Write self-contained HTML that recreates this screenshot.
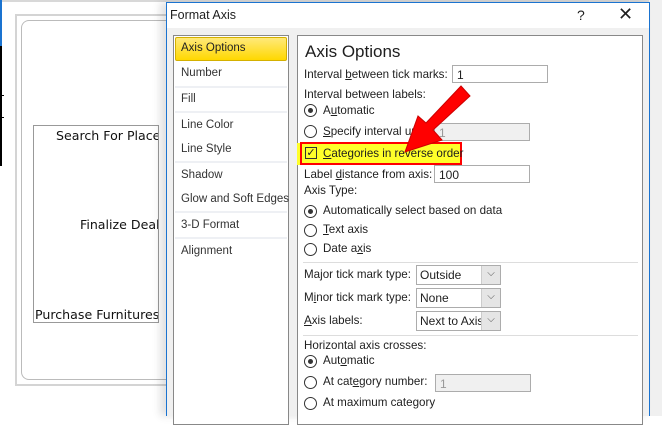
<!DOCTYPE html><html><head><style>
body{margin:0;width:662px;height:416px;overflow:hidden;background:#fff;font-family:"Liberation Sans",sans-serif;font-size:12px;color:#1e1e1e;position:relative}
.a{position:absolute;white-space:nowrap}
.li{position:absolute;left:181px;font-size:11.5px;color:#333}
.sep{position:absolute;left:175px;width:112px;height:2px;background:#eef0f4}
.t{position:absolute;font-size:11.6px;white-space:nowrap}
.r{position:absolute;width:11px;height:11px;border:1px solid #333;border-radius:50%;background:#fff}
.r.on::after{content:"";position:absolute;left:3px;top:3px;width:5px;height:5px;border-radius:50%;background:#333}
.in{position:absolute;height:18px;border:1px solid #acacac;background:#fff;font-size:12px;line-height:18px;padding-left:4px;box-sizing:border-box}
.sel{position:absolute;width:85px;height:20px;border:1px solid #acacac;background:#fff;box-sizing:border-box;font-size:12px;line-height:18px;padding-left:3px}
.sel::after{content:"⌵";position:absolute;right:0;top:0;width:18px;height:18px;background:#e5e5e5;border-left:1px solid #ccc;text-align:center;font-size:10px;line-height:16px;color:#555}
.hr{position:absolute;left:303px;width:335px;height:1px;background:#ddd}
.ct{position:absolute;font-size:12.6px;font-family:'DejaVu Sans',sans-serif;color:#111;white-space:nowrap}
</style></head><body>
<div class="a" style="left:0;top:0;width:662px;height:2px;background:#d8d8d8"></div>
<div class="a" style="left:0;top:0;width:2px;height:46px;background:#1a73d0"></div>
<div class="a" style="left:0;top:46px;width:2px;height:120px;background:#000"></div>
<div class="a" style="left:0;top:95px;width:4px;height:1px;background:#000"></div>
<div class="a" style="left:0;top:117px;width:4px;height:1px;background:#000"></div>
<div class="a" style="left:15px;top:14px;width:160px;height:372px;border:2px solid #d4d4d4;border-right:none;box-sizing:border-box;background:#fff"></div>
<div class="a" style="left:21px;top:20px;width:150px;height:360px;border:1px solid #bbb;border-right:none;border-radius:8px 0 0 8px;box-sizing:border-box"></div>
<div class="a" style="left:33px;top:125px;width:126px;height:198px;border:1px solid #999;box-sizing:border-box;overflow:hidden">
<div class="ct" style="left:22px;top:2px">Search For Place</div>
<div class="ct" style="left:46px;top:91px">Finalize Deal</div>
<div class="ct" style="left:1px;top:181px">Purchase Furnitures</div>
</div>
<div class="a" style="left:649px;top:0;width:13px;height:416px;background:#f0f0f0"></div>
<div class="a" style="left:166px;top:2px;width:484px;height:414px;background:#f0f0f0;border:1px solid #1a73d0;border-bottom:none;box-sizing:border-box;box-shadow:-6px 0 8px rgba(0,0,0,.12)"></div>
<div class="a" style="left:167px;top:3px;width:482px;height:25px;background:#fff"></div>
<div class="a" style="left:170px;top:8px;font-size:12.5px">Format Axis</div>
<div class="a" style="left:577px;top:7px;font-size:14px">?</div>
<div class="a" style="left:618px;top:4px;font-size:18px;font-weight:300">✕</div>
<div class="a" style="left:173px;top:35px;width:116px;height:390px;background:#fff;border:1px solid #888;box-sizing:border-box"></div>
<div class="a" style="left:175px;top:37px;width:112px;height:24px;background:linear-gradient(#ffe97a,#ffd800);border:1px solid #d4b000;border-radius:2px;box-sizing:border-box"></div>
<div class="li" style="top:42px;color:#222">Axis Options</div>
<div class="li" style="top:67px">Number</div><div class="sep" style="top:86px"></div>
<div class="li" style="top:93px">Fill</div><div class="sep" style="top:111px"></div>
<div class="li" style="top:119px">Line Color</div>
<div class="li" style="top:143px">Line Style</div><div class="sep" style="top:161px"></div>
<div class="li" style="top:169px">Shadow</div>
<div class="li" style="top:193px">Glow and Soft Edges</div><div class="sep" style="top:211px"></div>
<div class="li" style="top:219px">3-D Format</div><div class="sep" style="top:237px"></div>
<div class="li" style="top:245px">Alignment</div>
<div class="a" style="left:297px;top:35px;width:346px;height:390px;background:#fff;border:1px solid #888;box-sizing:border-box"></div>
<div class="t" style="left:305px;top:42px;font-size:17px">Axis Options</div>
<div class="t" style="left:304px;top:68px">Interval <u>b</u>etween tick marks:</div>
<div class="in" style="left:452px;top:65px;width:96px">1</div>
<div class="t" style="left:304px;top:88px">Interval between labels:</div>
<div class="r on" style="left:304px;top:104px"></div><div class="t" style="left:323px;top:104px">A<u>u</u>tomatic</div>
<div class="r" style="left:304px;top:125px"></div><div class="t" style="left:323px;top:125px"><u>S</u>pecify interval unit:</div>
<div class="in" style="left:434px;top:123px;width:96px;background:#f0f0f0;color:#999">1</div>
<div class="a" style="left:297px;top:143px;width:165px;height:22px;background:#ffff2a"></div>
<div class="a" style="left:300px;top:142px;width:162px;height:23px;border:2px solid #f00;box-sizing:border-box"></div>
<div class="a" style="left:305px;top:147px;width:12px;height:12px;border:1px solid #333;box-sizing:border-box;font-size:11px;line-height:10px;text-align:center">✓</div>
<div class="t" style="left:323px;top:147px"><u>C</u>ategories in reverse order</div>
<div class="t" style="left:304px;top:168px">Label <u>d</u>istance from axis:</div>
<div class="in" style="left:434px;top:165px;width:96px">100</div>
<div class="t" style="left:304px;top:184px">Axis Type:</div>
<div class="r on" style="left:304px;top:205px"></div><div class="t" style="left:323px;top:204px">Automatically select based on data</div>
<div class="r" style="left:304px;top:224px"></div><div class="t" style="left:323px;top:223px"><u>T</u>ext axis</div>
<div class="r" style="left:304px;top:243px"></div><div class="t" style="left:323px;top:242px">Date a<u>x</u>is</div>
<div class="hr" style="top:262px"></div>
<div class="t" style="left:304px;top:268px">Ma<u>j</u>or tick mark type:</div><div class="sel" style="left:416px;top:265px">Outside</div>
<div class="t" style="left:304px;top:291px">M<u>i</u>nor tick mark type:</div><div class="sel" style="left:416px;top:288px">None</div>
<div class="t" style="left:304px;top:314px"><u>A</u>xis labels:</div><div class="sel" style="left:416px;top:311px">Next to Axis</div>
<div class="hr" style="top:335px"></div>
<div class="t" style="left:304px;top:339px">Horizontal axis crosses:</div>
<div class="r on" style="left:304px;top:355px"></div><div class="t" style="left:323px;top:354px">Aut<u>o</u>matic</div>
<div class="r" style="left:304px;top:376px"></div><div class="t" style="left:323px;top:375px">At cat<u>e</u>gory number:</div>
<div class="in" style="left:435px;top:374px;width:96px;background:#f0f0f0;color:#999">1</div>
<div class="r" style="left:304px;top:397px"></div><div class="t" style="left:323px;top:396px">At maximum cate<u>g</u>ory</div>
<svg class="a" style="left:0;top:0" width="662" height="416"><polygon points="461,86 470,96 433,130 442,140 405,152 418,116 426,123" fill="#f00" stroke="#c00" stroke-width="1"/></svg>
</body></html>
